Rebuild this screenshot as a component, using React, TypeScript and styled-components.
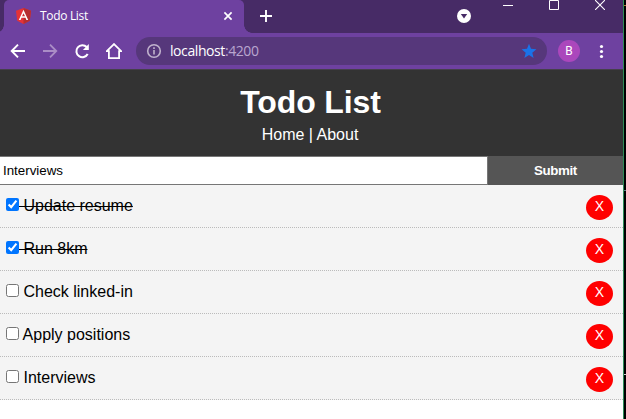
import React, { useState } from 'react';
import styled, { createGlobalStyle } from 'styled-components';

const GlobalStyle = createGlobalStyle`
  * { box-sizing: border-box; }
  body { margin: 0; background: #000; font-family: Arial, 'Liberation Sans', sans-serif; overflow: hidden; }
`;

const Desktop = styled.div`
  display: flex;
  width: 626px;
  height: 419px;
  background: #000;
`;

const Window = styled.div`
  display: flex;
  flex-direction: column;
  width: 624px;
  border-right: 1px solid #2e8b57;
  background: #fff;
`;

const Edge = styled.div`
  display: grid;
  grid-template-rows: 5px 1px 184px 1px 183px 1px;
  width: 2px;
`;

const Tick = styled.span<{ $row: number; $color: string }>`
  grid-row: ${p => p.$row};
  background: ${p => p.$color};
`;

const TabStrip = styled.div`
  display: flex;
  height: 33px;
  background: #472b66;
  overflow: hidden;
`;

const Tab = styled.div`
  position: relative;
  display: flex;
  align-items: center;
  width: 240px;
  height: 33px;
  margin-left: 4px;
  padding: 0 10px 1px 12px;
  background: #6e41a0;
  border-radius: 5px 5px 0 0;
  &::before, &::after {
    content: '';
    position: absolute;
    bottom: 0;
    width: 8px;
    height: 8px;
  }
  &::before { left: -8px; background: radial-gradient(circle at 0 0, transparent 7.5px, #6e41a0 8px); }
  &::after { right: -8px; background: radial-gradient(circle at 100% 0, transparent 7.5px, #6e41a0 8px); }
`;

const TabTitle = styled.span`
  flex: 1;
  margin-left: 9px;
  color: #fff;
  font: 12px/16px 'Segoe UI', 'Open Sans', sans-serif;
  letter-spacing: -0.32px;
`;

const StripGap = styled.div<{ $w: number }>`
  flex: 0 0 ${p => p.$w}px;
`;

const Icon = styled.svg`
  display: block;
  flex: none;
`;

const StripIcon = styled(Icon)<{ $top: number }>`
  margin-top: ${p => p.$top}px;
`;

const Toolbar = styled.div`
  display: flex;
  align-items: center;
  height: 36px;
  padding-left: 10px;
  background: #6e41a0;
`;

const NavIcons = styled.div`
  display: flex;
  gap: 16px;
  width: 126px;
`;

const AddressBar = styled.div`
  display: flex;
  align-items: center;
  width: 411px;
  height: 28px;
  padding: 0 10px;
  border-radius: 14px;
  background: #56377b;
`;

const Url = styled.span`
  flex: 1;
  margin-left: 8px;
  color: #fff;
  font: 14px/20px 'Segoe UI', 'Open Sans', sans-serif;
  letter-spacing: -0.42px;
`;

const Port = styled.span`
  color: #b9a6cf;
`;

const Avatar = styled.span`
  display: flex;
  align-items: center;
  justify-content: center;
  width: 22px;
  height: 22px;
  margin: 0 14px 0 11px;
  border-radius: 50%;
  background: #ab47bc;
  color: #fff;
  font: 12px/22px Roboto, sans-serif;
`;

const Header = styled.header`
  height: 87px;
  padding-top: 14px;
  border-top: 1px solid #45404a;
  background: #333;
  color: #fff;
  text-align: center;
`;

const Title = styled.h1`
  margin: 0;
  padding-right: 2px;
  font-size: 32px;
  line-height: 37px;
  letter-spacing: -0.12px;
`;

const Nav = styled.nav`
  margin-top: 4px;
  padding-right: 3px;
  font-size: 16px;
  line-height: 20px;
`;

const Form = styled.form`
  display: flex;
  height: 29px;
`;

const Input = styled.input`
  width: 488px;
  height: 29px;
  margin: 0;
  padding: 1px 2px 1px 3px;
  border: 1px solid #767676;
  border-left: 0;
  border-radius: 0;
  outline: 0;
  background: #fff;
  color: #000;
  font: 13.333px Arial, 'Liberation Sans', sans-serif;
`;

const Submit = styled.button`
  flex: 1;
  padding: 0;
  border: 0;
  background: #555;
  color: #fff;
  font: bold 13.333px Arial, 'Liberation Sans', sans-serif;
  letter-spacing: -0.4px;
`;

const Row = styled.label`
  display: flex;
  align-items: flex-start;
  height: 43px;
  padding: 10px 10px 0 6px;
  border-bottom: 1px dotted #bbb;
  background: #f4f4f4;
  color: #000;
  font-size: 16px;
  line-height: 22px;
`;

const Check = styled.input`
  width: 13px;
  height: 13px;
  margin: 3px 0 0;
`;

const Text = styled.span<{ $done: boolean }>`
  flex: 1;
  white-space: pre;
  text-decoration: ${p => (p.$done ? 'line-through' : 'none')};
`;

const Delete = styled.button`
  width: 27px;
  height: 25px;
  padding: 0 0 2px;
  border: 0;
  border-radius: 50%;
  background: #f00;
  color: #fff;
  font: 14px/23px Arial, 'Liberation Sans', sans-serif;
`;

const initial = [
  { title: 'Update resume', done: true },
  { title: 'Run 8km', done: true },
  { title: 'Check linked-in', done: false },
  { title: 'Apply positions', done: false },
  { title: 'Interviews', done: false },
];

function BrowserTabs() {
  return (
    <TabStrip>
      <Tab>
        <Icon width="15" height="16" viewBox="0 0 15 16">
          <path fill="#e53238" d="M7.5 0 0 2.7 1.2 12.7 7.5 16l6.3-3.3L15 2.7z" />
          <path fill="#b52e31" d="M7.5 0v16l6.3-3.3L15 2.7z" />
          <path fill="#fff" fillRule="evenodd" d="M7.5 1.8 2.8 12h1.8l.9-2.3h4l.9 2.3h1.8zm0 3.5L9 8.3H6z" />
        </Icon>
        <TabTitle>Todo List</TabTitle>
        <Icon width="12" height="12" viewBox="0 0 12 12" stroke="#fff" strokeWidth="1.7">
          <path d="m2.4 2.4 7.2 7.2m0-7.2L2.4 9.6" />
        </Icon>
      </Tab>
      <StripGap $w={16} />
      <StripIcon $top={10} width="12" height="12" viewBox="0 0 12 12" stroke="#fff" strokeWidth="1.9">
        <path d="M6 0v12M0 6h12" />
      </StripIcon>
      <StripGap $w={185} />
      <StripIcon $top={9} width="14" height="14" viewBox="0 0 14 14">
        <circle cx="7" cy="7" r="7" fill="#fff" />
        <path d="M3.8 5h6.4L7 9.4z" fill="#472b66" />
      </StripIcon>
      <StripGap $w={32} />
      <StripIcon $top={5} width="10" height="1" viewBox="0 0 10 1">
        <path d="M0 0h10v1H0z" fill="#fff" />
      </StripIcon>
      <StripGap $w={36} />
      <StripIcon $top={0} width="10" height="10" viewBox="0 0 10 10" fill="none" stroke="#fff">
        <path d="M.5.5h9v9h-9z" />
      </StripIcon>
      <StripGap $w={36} />
      <StripIcon $top={0} width="10" height="10" viewBox="0 0 10 10" stroke="#fff" strokeWidth="1.1">
        <path d="m0 0 10 10M10 0 0 10" />
      </StripIcon>
    </TabStrip>
  );
}

function BrowserToolbar() {
  return (
    <Toolbar>
      <NavIcons>
        <Icon width="16" height="16" viewBox="0 0 16 16" fill="none" stroke="#fff" strokeWidth="1.9">
          <path d="M15 8H2M8 1.7 1.7 8 8 14.3" />
        </Icon>
        <Icon width="16" height="16" viewBox="0 0 16 16" fill="none" stroke="#aa8dc6" strokeWidth="1.8">
          <path d="M1 8h13M8 1.7 14.3 8 8 14.3" />
        </Icon>
        <Icon width="16" height="16" viewBox="0 0 16 16" fill="none" stroke="#fff" strokeWidth="2">
          <path d="M13.7 11A6 6 0 1 1 12.7 4" />
          <path d="M14.8 1v6H8.9z" fill="#fff" stroke="none" />
        </Icon>
        <Icon width="16" height="16" viewBox="0 0 16 16" fill="none" stroke="#fff" strokeWidth="1.8">
          <path d="M.8 8.2 8 1.1l7.2 7.1h-2.1v6.9H2.9V8.2z" />
        </Icon>
      </NavIcons>
      <AddressBar>
        <Icon width="16" height="16" viewBox="0 0 16 16" fill="none" stroke="#c0b2cd" strokeWidth="1.6">
          <circle cx="8" cy="8" r="6.3" />
          <path d="M8 7v4.5M8 4.3v1.6" />
        </Icon>
        <Url>localhost<Port>:4200</Port></Url>
        <Icon width="16" height="16" viewBox="0 0 16 16">
          <path fill="#1a73e8" d="m8 .8 2 5 5.4.4-4.1 3.5 1.3 5.2L8 12.1l-4.6 2.8 1.3-5.2L.6 6.2 6 5.8z" />
        </Icon>
      </AddressBar>
      <Avatar>B</Avatar>
      <Icon width="16" height="16" viewBox="0 0 16 16" fill="#fff">
        <circle cx="7.5" cy="3.5" r="1.6" />
        <circle cx="7.5" cy="8.5" r="1.6" />
        <circle cx="7.5" cy="13.5" r="1.6" />
      </Icon>
    </Toolbar>
  );
}

export default function App() {
  const [items, setItems] = useState(initial);
  const [draft, setDraft] = useState('Interviews');
  const toggle = (i: number) =>
    setItems(items.map((t, n) => (n === i ? { ...t, done: !t.done } : t)));
  const remove = (i: number) => setItems(items.filter((_, n) => n !== i));
  const add = (e: React.FormEvent) => {
    e.preventDefault();
    setItems([...items, { title: draft, done: false }]);
  };

  return (
    <>
      <GlobalStyle />
      <Desktop>
        <Window>
          <BrowserTabs />
          <BrowserToolbar />
          <Header>
            <Title>Todo List</Title>
            <Nav>Home | About</Nav>
          </Header>
          <Form onSubmit={add}>
            <Input value={draft} onChange={e => setDraft(e.target.value)} />
            <Submit type="submit">Submit</Submit>
          </Form>
          {items.map((t, i) => (
            <Row key={i}>
              <Check type="checkbox" checked={t.done} onChange={() => toggle(i)} />
              <Text $done={t.done}>{' ' + t.title}</Text>
              <Delete type="button" onClick={() => remove(i)}>X</Delete>
            </Row>
          ))}
        </Window>
        <Edge>
          <Tick $row={2} $color="#b07a3a" />
          <Tick $row={4} $color="#5f7f86" />
          <Tick $row={6} $color="#cfcfcf" />
        </Edge>
      </Desktop>
    </>
  );
}
